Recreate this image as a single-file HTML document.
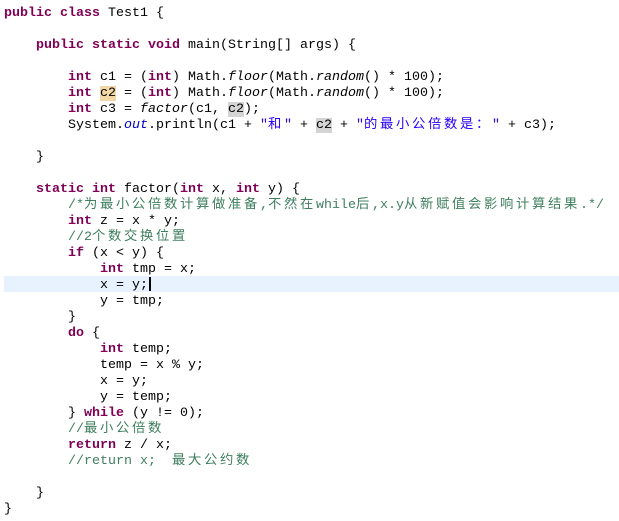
<!DOCTYPE html>
<html><head><meta charset="utf-8"><style>
html,body{margin:0;padding:0;background:#fff;width:619px;height:521px;overflow:hidden}
#code{position:absolute;left:4px;top:6px;font-family:"Liberation Mono","Noto Sans CJK SC",monospace;font-size:13.33px;color:#000}
#code div{height:16px;line-height:16px;white-space:pre;overflow:visible}
.k{color:#7f0055;font-weight:bold}
.m{color:#3f7f5f}
.s{color:#2a00ff}
.i{font-style:italic}
.f{color:#0000c0;font-style:italic}
.c{letter-spacing:2.67px;font-family:"Noto Sans CJK SC",sans-serif;font-size:13.33px;line-height:1px}
.o{background:#d4d4d4}
.w{background:#f1d8a6}
#hl{position:absolute;left:4px;top:276px;width:615px;height:16px;background:#e8f2fe}
#cur{position:absolute;left:149px;top:277px;width:2px;height:14px;background:#000}
</style></head><body>
<div id="hl"></div><div id="cur"></div>
<div id="code">
<div><span class="k">public</span> <span class="k">class</span> Test1 {</div>
<div> </div>
<div>    <span class="k">public</span> <span class="k">static</span> <span class="k">void</span> main(String[] args) {</div>
<div> </div>
<div>        <span class="k">int</span> c1 = (<span class="k">int</span>) Math.<span class="i">floor</span>(Math.<span class="i">random</span>() * 100);</div>
<div>        <span class="k">int</span> <span class="w">c2</span> = (<span class="k">int</span>) Math.<span class="i">floor</span>(Math.<span class="i">random</span>() * 100);</div>
<div>        <span class="k">int</span> c3 = <span class="i">factor</span>(c1, <span class="o">c2</span>);</div>
<div>        System.<span class="f">out</span>.println(c1 + <span class="s">"<span class="c">和</span>"</span> + <span class="o">c2</span> + <span class="s">"<span class="c">的最小公倍数是：</span>"</span> + c3);</div>
<div> </div>
<div>    }</div>
<div> </div>
<div>    <span class="k">static</span> <span class="k">int</span> factor(<span class="k">int</span> x, <span class="k">int</span> y) {</div>
<div>        <span class="m">/*<span class="c">为最小公倍数计算做准备</span>,<span class="c">不然在</span>while<span class="c">后</span>,x.y<span class="c">从新赋值会影响计算结果</span>.*/</span></div>
<div>        <span class="k">int</span> z = x * y;</div>
<div>        <span class="m">//2<span class="c">个数交换位置</span></span></div>
<div>        <span class="k">if</span> (x &lt; y) {</div>
<div>            <span class="k">int</span> tmp = x;</div>
<div>            x = y;</div>
<div>            y = tmp;</div>
<div>        }</div>
<div>        <span class="k">do</span> {</div>
<div>            <span class="k">int</span> temp;</div>
<div>            temp = x % y;</div>
<div>            x = y;</div>
<div>            y = temp;</div>
<div>        } <span class="k">while</span> (y != 0);</div>
<div>        <span class="m">//<span class="c">最小公倍数</span></span></div>
<div>        <span class="k">return</span> z / x;</div>
<div>        <span class="m">//return x;  <span class="c">最大公约数</span></span></div>
<div> </div>
<div>    }</div>
<div>}</div>
</div>
</body></html>
